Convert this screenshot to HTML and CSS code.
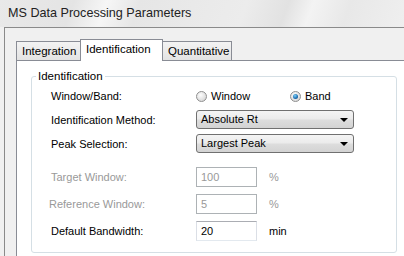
FILE: index.html
```html
<!DOCTYPE html>
<html lang="en">
<head>
    <meta charset="UTF-8">
    <title>MS Data Processing Parameters</title>
    <link rel="stylesheet" href="styles.css">
</head>
<body>
    <div class="titlebar">MS Data Processing Parameters</div>

    <div class="frame">
        <div class="tabs">
            <div class="tab">Integration</div>
            <div class="tab active">Identification</div>
            <div class="tab">Quantitative</div>
        </div>

        <div class="panel">
            <fieldset class="group">
                <legend>Identification</legend>

                <div class="row row-band">
                    <span class="label">Window/Band:</span>
                    <div class="radios">
                        <label class="radio"><span class="dot"></span>Window</label>
                        <label class="radio checked"><span class="dot"></span>Band</label>
                    </div>
                </div>

                <div class="row row-select">
                    <span class="label">Identification Method:</span>
                    <div class="select">Absolute Rt<span class="arrow"></span></div>
                </div>

                <div class="row row-select">
                    <span class="label">Peak Selection:</span>
                    <div class="select">Largest Peak<span class="arrow"></span></div>
                </div>

                <div class="row row-input first disabled">
                    <span class="label">Target Window:</span>
                    <div class="textbox">100</div>
                    <span class="unit">%</span>
                </div>

                <div class="row row-input disabled">
                    <span class="label ref">Reference Window:</span>
                    <div class="textbox">5</div>
                    <span class="unit">%</span>
                </div>

                <div class="row row-input">
                    <span class="label">Default Bandwidth:</span>
                    <div class="textbox">20</div>
                    <span class="unit">min</span>
                </div>
            </fieldset>
        </div>
    </div>
</body>
</html>
```

FILE: styles.css
```css
body {
    margin: 0;
    width: 404px;
    height: 256px;
    overflow: hidden;
    font-family: "Liberation Sans", Arial, sans-serif;
    font-size: 11px;
    color: #000;
    background: #f0f0f0;
}
.titlebar {
    height: 27px;
    line-height: 27px;
    padding-left: 8px;
    font-size: 12.6px;
    color: #222;
    background: linear-gradient(110deg, #e9e9e9 0%, #e4e4e4 18%, #f6f6f6 26%, #e6e6e6 34%, #ececec 60%, #e2e2e2 70%, #f3f3f3 76%, #e8e8e8 85%, #efefef 100%);
}
.frame {
    margin-left: 4px;
    border-top: 1px solid #8a8a8a;
    border-left: 1px solid #8a8a8a;
    padding: 11px 0 0 11px;
    height: 229px;
    box-sizing: border-box;
    background: #f0f0f0;
}
.tabs {
    display: flex;
    align-items: flex-end;
    height: 21px;
    position: relative;
    z-index: 1;
}
.tab {
    height: 18px;
    line-height: 18px;
    padding: 0 5px;
    border: 1px solid #898c95;
    border-bottom: none;
    background: linear-gradient(#f3f3f3, #e3e3e3);
    font-size: 11.5px;
}
.tab + .tab {
    margin-left: -1px;
}
.tab:first-child {
    width: 53px;
}
.tab.active {
    height: 21px;
    line-height: 19px;
    width: 71px;
    padding: 0 5px;
    background: #fff;
    margin-bottom: -1px;
    position: relative;
}
.tab:last-child {
    width: 58px;
    padding-left: 5px;
}
.panel {
    border: 1px solid #898c95;
    border-right: none;
    border-bottom: none;
    background: #fff;
    padding: 9px 0 0 14px;
    height: 196px;
}
.group {
    width: 366px;
    margin: 0;
    padding: 4px 0 7px 0;
    border: 1px solid #d5dfe5;
    border-radius: 3px;
    box-sizing: border-box;
    height: 183px;
}
.group legend {
    padding: 0 2px;
    margin-left: 4px;
    line-height: 13px;
    font-size: 11.5px;
}
.row {
    display: flex;
    align-items: center;
    height: 19px;
    margin-top: 5px;
}
.row-band {
    height: 18px;
    margin-top: 0;
}
.row-input {
    height: 20px;
    margin-top: 7px;
}
.row-input.first {
    margin-top: 14px;
}
.label {
    width: 145px;
    padding-left: 19px;
    flex-shrink: 0;
}
.label.ref {
    padding-left: 17px;
    width: 147px;
}
.radios {
    display: flex;
}
.radio {
    display: flex;
    align-items: center;
    width: 94px;
}
.dot {
    width: 11px;
    height: 11px;
    border: 1px solid #8f8f8f;
    border-radius: 50%;
    margin-right: 4px;
    background: radial-gradient(circle at 40% 35%, #fdfdfd, #dcdcdc 70%, #c8c8c8);
    box-sizing: border-box;
    flex-shrink: 0;
    display: flex;
    align-items: center;
    justify-content: center;
}
.radio.checked .dot::after {
    content: "";
    width: 5px;
    height: 5px;
    border-radius: 50%;
    background: radial-gradient(circle at 40% 35%, #7fd0f5, #1a6db2 60%, #0b3e78);
}
.select {
    position: relative;
    width: 158px;
    height: 19px;
    line-height: 17px;
    padding-left: 4px;
    box-sizing: border-box;
    border: 1px solid #707070;
    border-radius: 3px;
    background: linear-gradient(#f4f4f4 0%, #ebebeb 48%, #dddddd 52%, #d3d3d3 100%);
}
.arrow {
    position: absolute;
    right: 5px;
    top: 7px;
    border-left: 4px solid transparent;
    border-right: 4px solid transparent;
    border-top: 4px solid #000;
}
.textbox {
    width: 61px;
    height: 20px;
    line-height: 18px;
    padding-left: 4px;
    box-sizing: border-box;
    border: 1px solid #e3e9ef;
    border-top-color: #abadb3;
    border-left-color: #dbdfe6;
    border-right-color: #dbdfe6;
    background: #fff;
}
.unit {
    margin-left: 12px;
}
.disabled .label,
.disabled .textbox,
.disabled .unit {
    color: #999;
}
.disabled .textbox {
    border-color: #adb2b5;
}
```
